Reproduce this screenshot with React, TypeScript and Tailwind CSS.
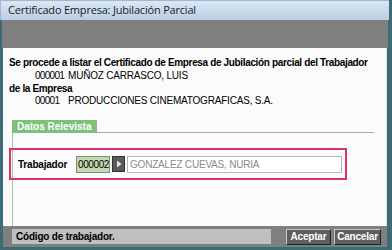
export default function App() {
  const bold = "font-['Liberation_Sans',Arial,sans-serif] font-bold";
  const plain = "font-['Liberation_Sans',Arial,sans-serif]";
  return (
    <div className="w-[392px] h-[250px] flex flex-col bg-[#3b6b74] overflow-hidden">
      {/* title bar */}
      <div className="h-[20px] flex items-center pl-[7px] bg-gradient-to-b from-[#dbe7f3] to-[#b9cfe5] border-t border-l border-[#9fb6cc] mr-[3px]">
        <span className="text-[11px] text-[#1a1a1a] font-['Open_Sans',sans-serif] tracking-[-0.2px]">
          Certificado Empresa: Jubilación Parcial
        </span>
      </div>
      {/* gray band */}
      <div className="h-[28px] bg-[#7f7f7f] ml-[2px] mr-[4px]" />
      {/* content */}
      <div className="flex-1 flex flex-col bg-[#fbfbfb] ml-[3px] mr-[5px] border-r border-[#e6e6e6] pt-[9px] pl-[6px]">
        <div className={`${bold} text-[10px] leading-[12px] text-black tracking-[-0.35px]`}>
          Se procede a listar el Certificado de Empresa de Jubilación parcial del Trabajador
        </div>
        <div className={`${plain} text-[10px] leading-[12px] text-black flex mt-[1px] pl-[26px] tracking-[-0.2px]`}>
          <span className="w-[33px] shrink-0 whitespace-nowrap tracking-[-0.7px]">000001</span>
          <span>MUÑOZ CARRASCO, LUIS</span>
        </div>
        <div className={`${bold} text-[10px] leading-[12px] text-black mt-[1px] tracking-[-0.35px]`}>
          de la Empresa
        </div>
        <div className={`${plain} text-[10px] leading-[12px] text-black flex pl-[26px] tracking-[-0.2px]`}>
          <span className="w-[33px] shrink-0 whitespace-nowrap tracking-[-0.7px]">00001</span>
          <span>PRODUCCIONES CINEMATOGRAFICAS, S.A.</span>
        </div>
        {/* tab */}
        <div className="mt-[13px] ml-[3px] flex items-end">
          <div className={`${bold} text-[10px] leading-[12px] text-white bg-[#7cc07c] px-[5px] pt-[1px] w-[85px] h-[13px]`}>
            Datos Relevista
          </div>
          <div className="flex-1 h-[1px] bg-[#a8a8a8] mr-[12px]" />
        </div>
        <div className="flex-1 ml-[3px] border-l border-[#9ccf9c] flex flex-col pt-[15px]">
          <div className="ml-[-4px] w-[338px] h-[32px] border-2 border-[#d8336a] flex items-center pl-[7px]">
            <span className={`${bold} text-[10px] text-black w-[58px] tracking-[-0.2px]`}>Trabajador</span>
            <div className={`${plain} h-[17px] w-[34px] bg-[#c4d9b0] border border-[#7f8f76] text-[10px] leading-[15px] pl-[1px] text-black tracking-[-0.4px]`}>
              000002
            </div>
            <div className="ml-[2px] h-[16px] w-[13px] bg-[#5a5a5a] border border-[#333] flex items-center justify-center">
              <svg width="6" height="8" viewBox="0 0 6 8">
                <path d="M1 0.5 L5.5 4 L1 7.5 Z" fill="#e8e8e8" />
              </svg>
            </div>
            <div className={`${plain} ml-[2px] h-[17px] w-[215px] bg-white border border-[#b8b8b8] text-[10px] leading-[15px] pl-[2px] text-[#8a8a8a] tracking-[-0.2px]`}>
              GONZALEZ CUEVAS, NURIA
            </div>
          </div>
        </div>
      </div>
      {/* status bar */}
      <div className="h-[21px] bg-[#7f7f7f] ml-[3px] mr-[5px] mb-[3px] flex items-center pl-[9px] pr-[6px]">
        <div className={`${bold} w-[259px] h-[15px] bg-[#bfbfbf] text-[10px] leading-[15px] pl-[4px] text-black tracking-[-0.2px]`}>
          Código de trabajador.
        </div>
        <div className="flex-1" />
        <button className={`${bold} h-[16px] w-[45px] bg-[#5f5f5f] border border-t-[#c8c8c8] border-l-[#c8c8c8] border-b-[#222] border-r-[#222] text-white text-[10px] leading-[13px] tracking-[-0.2px]`}>
          Aceptar
        </button>
        <button className={`${bold} ml-[3px] h-[16px] w-[47px] bg-[#5f5f5f] border border-t-[#c8c8c8] border-l-[#c8c8c8] border-b-[#222] border-r-[#222] text-white text-[10px] leading-[13px] tracking-[-0.2px]`}>
          Cancelar
        </button>
      </div>
    </div>
  );
}
